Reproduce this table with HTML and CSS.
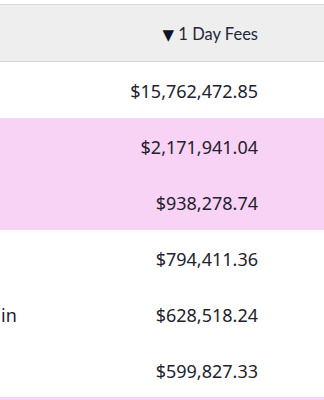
FILE: index.html
```html
<!DOCTYPE html>
<html>
<head>
<meta charset="utf-8">
<link rel="stylesheet" href="styles.css">
</head>
<body>
<div class="table">
  <div class="row head">
    <div class="name"></div>
    <div class="fees"><span class="arrow">▼</span> 1 Day Fees</div>
  </div>
  <div class="row"><div class="name"></div><div class="fees">$15,762,472.85</div></div>
  <div class="row pink"><div class="name"></div><div class="fees">$2,171,941.04</div></div>
  <div class="row pink"><div class="name"></div><div class="fees">$938,278.74</div></div>
  <div class="row"><div class="name"></div><div class="fees">$794,411.36</div></div>
  <div class="row"><div class="name"><span class="clip">in</span></div><div class="fees">$628,518.24</div></div>
  <div class="row"><div class="name"></div><div class="fees">$599,827.33</div></div>
  <div class="row pink"><div class="name"></div><div class="fees"></div></div>
</div>
</body>
</html>
```
FILE: styles.css
```css
html, body {
  margin: 0;
  padding: 0;
  background: #ffffff;
}
body {
  padding-top: 4px;
  overflow: hidden;
  height: 400px;
}
.table {
  width: 324px;
  border-top: 1px solid #d9d9d9;
}
.row {
  display: flex;
  align-items: center;
  height: 55.9px;
  font-family: "Noto Sans", sans-serif;
  font-size: 18px;
  color: #22222c;
  background: #ffffff;
}
.row .fees,
.row .name {
  padding-top: 3px;
}
.row.pink {
  background: #f9d3f6;
}
.row.head {
  height: 56px;
  background: #eeeeee;
  border-bottom: 1px solid #d6d6d6;
  font-family: "Lato", sans-serif;
  font-size: 16.5px;
  color: #23273a;
}
.name {
  flex: 1;
  overflow: hidden;
  white-space: nowrap;
}
.clip {
  display: inline-block;
  padding-left: 1px;
}
.fees {
  padding-right: 66px;
  text-align: right;
  white-space: nowrap;
}
.head .fees {
  padding-top: 2px;
}
.arrow {
  font-family: "DejaVu Sans", sans-serif;
  font-size: 15px;
  color: #0e1226;
}
```
